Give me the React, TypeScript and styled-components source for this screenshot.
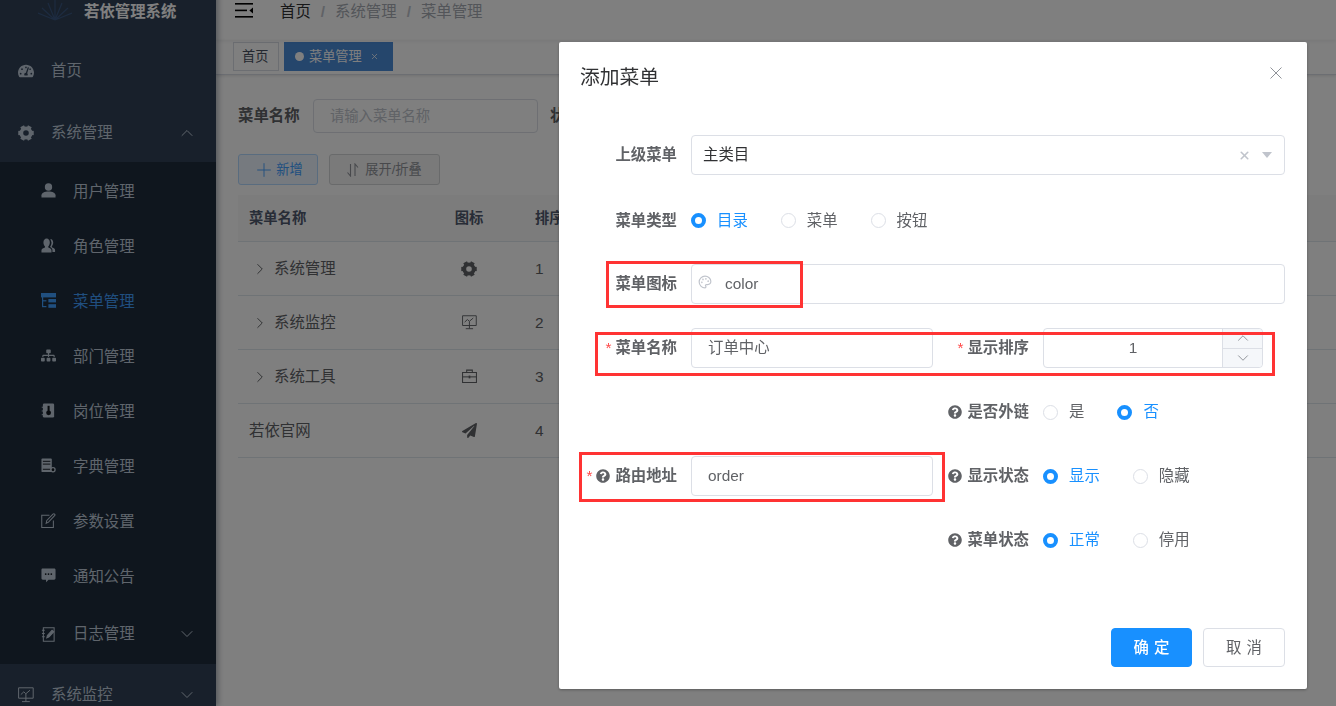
import React, { ReactNode } from "react";
import styled, { createGlobalStyle } from "styled-components";
import { FaPaperPlane, FaQuestionCircle, FaSitemap, FaTachometerAlt } from "react-icons/fa";
import { FiChevronDown, FiChevronRight, FiChevronUp, FiPlus, FiX } from "react-icons/fi";
import { LuPalette } from "react-icons/lu";

const GlobalStyle = createGlobalStyle`
  html, body { margin: 0; padding: 0; height: 100%; overflow: hidden; }
  body {
    font-family: "Liberation Sans", "Noto Sans CJK SC", sans-serif;
    font-size: 15.4px;
    line-height: 20px;
    color: #606266;
    background: #fff;
  }
  * { box-sizing: border-box; }
`;

// ---- drawn icons (ruoyi svg set)
type IconProps = { size?: number };

const GearIcon = ({ size = 16 }: IconProps) => (
  <svg width={size} height={size} viewBox="0 0 24 24" fill="none" stroke="currentColor">
    <circle cx="12" cy="12" r="7" strokeWidth="5.6" />
    {[0, 60, 120, 180, 240, 300].map((a) => (
      <line key={a} x1="12" y1="0.4" x2="12" y2="5" strokeWidth="6.4" transform={`rotate(${a + 30} 12 12)`} />
    ))}
  </svg>
);

const UserIcon = ({ size = 16 }: IconProps) => (
  <svg width={size} height={size} viewBox="0 0 16 16" fill="currentColor">
    <ellipse cx="8" cy="4.2" rx="3.9" ry="4" />
    <path d="M0.5 15.5v-2.4c0-2.6 3.4-4 7.5-4s7.5 1.4 7.5 4v2.4z" />
  </svg>
);

const PeoplesIcon = ({ size = 16 }: IconProps) => (
  <svg width={size} height={size} viewBox="0 0 16 16" fill="currentColor">
    <path d="M6 0.5c2 0 3.4 1.8 3.4 4.2 0 2-0.8 3.3-1.6 4.1v1.4c1.4 0.6 3.4 1.3 3.4 3v2.3H0.5v-2.3c0-1.7 2.2-2.4 3.7-3V8.8C3.400 8 2.600 6.700 2.600 4.700 2.600 2.300 4 0.500 6 0.500z" />
    <path d="M10 1c1.800 0.200 3 1.700 3 3.700 0 1.700-0.600 3-1.400 3.800v1.300c1.400 0.600 3.400 1.300 3.400 3v2.200h-2.800v-2.300c0-1.500-1.200-2.500-2.600-3.200 0.800-1 1.600-2.500 1.600-4.600C10.700 3.500 10.500 2.100 10 1z" />
  </svg>
);

const TreeTableIcon = ({ size = 16 }: IconProps) => (
  <svg width={size} height={size} viewBox="0 0 15 15" fill="currentColor">
    <rect x="0" y="0" width="15" height="4.4" />
    <rect x="1" y="0" width="1.2" height="14" />
    <rect x="1" y="7.2" width="4.4" height="1.2" />
    <rect x="1" y="13" width="4.4" height="1.2" />
    <rect x="7.4" y="6" width="7.600" height="3.400" />
    <rect x="7.4" y="11.200" width="7.600" height="3.600" />
  </svg>
);

const PostIcon = ({ size = 16 }: IconProps) => (
  <svg width={size} height={size} viewBox="0 0 16 16">
    <rect x="2" y="0.500" width="12" height="15" rx="1.400" fill="currentColor" />
    <rect x="0.800" y="4" width="2" height="1" fill="currentColor" />
    <rect x="0.800" y="8" width="2" height="1" fill="currentColor" />
    <rect x="0.800" y="12" width="2" height="1" fill="currentColor" />
    <rect x="7" y="3" width="2.200" height="6" fill="#10171f" />
    <circle cx="8.100" cy="10.500" r="2.600" fill="#10171f" />
  </svg>
);

const DictIcon = ({ size = 16 }: IconProps) => (
  <svg width={size} height={size} viewBox="0 0 16 16">
    <rect x="0.500" y="0.500" width="11" height="14.500" rx="1" fill="currentColor" />
    <rect x="2" y="3" width="8" height="1" fill="#10171f" />
    <rect x="2" y="6" width="8" height="1" fill="#10171f" />
    <rect x="2" y="11.500" width="8" height="1" fill="#10171f" />
    <circle cx="12.800" cy="12.500" r="2.200" fill="#10171f" stroke="currentColor" strokeWidth="1.400" />
  </svg>
);

const EditIcon = ({ size = 16 }: IconProps) => (
  <svg width={size} height={size} viewBox="0 0 16 16" fill="none" stroke="currentColor" strokeWidth="1.100">
    <path d="M9 2.500H0.800v13h12.400V8" />
    <path d="M5.500 11l0.700-3L12.800 1.200c0.500-0.500 1.200-0.500 1.700 0s0.500 1.200 0 1.700L8 9.800z" />
  </svg>
);

const MessageIcon = ({ size = 16 }: IconProps) => (
  <svg width={size} height={size} viewBox="0 0 16 16">
    <path
      d="M2 0.500h12c1 0 1.500 0.600 1.500 1.500v9c0 1-0.600 1.500-1.500 1.500H8L5.400 15.200v-2.700H2c-1 0-1.500-0.600-1.500-1.500V2C0.500 1 1 0.500 2 0.500z"
      fill="currentColor"
    />
    <circle cx="5" cy="6.500" r="0.950" fill="#10171f" />
    <circle cx="8" cy="6.500" r="0.950" fill="#10171f" />
    <circle cx="11" cy="6.500" r="0.950" fill="#10171f" />
  </svg>
);

const LogIcon = ({ size = 16 }: IconProps) => (
  <svg width={size} height={size} viewBox="0 0 16 16" fill="none" stroke="currentColor" strokeWidth="1.100">
    <path d="M2.500 0.800h11.500v14.400H2.500z" />
    <path d="M1 3.500h3M1 7h3M1 10.500h3" />
    <path d="M6.200 11.600l0.600-2.600 5-5.600 1.800 1.600-5 5.600z" fill="currentColor" />
  </svg>
);

const MonitorIcon = ({ size = 16 }: IconProps) => (
  <svg width={size} height={size} viewBox="0 0 16 16" fill="none" stroke="currentColor" strokeWidth="1">
    <path d="M0.600 0.800h14.600v10.400H0.600z" />
    <path d="M2.800 7.600l3-2.800 2 2 4.200-3.600" />
    <path d="M7.900 7v7.400M4 14.600h7.800" />
  </svg>
);

const ToolIcon = ({ size = 16 }: IconProps) => (
  <svg width={size} height={size} viewBox="0 0 16 16" fill="none" stroke="currentColor" strokeWidth="1.100">
    <path d="M0.600 3.800h14.800v10.600H0.600z" />
    <path d="M5 3.800V1.200h6v2.600" />
    <path d="M0.600 8.400h14.800" />
    <path d="M8 7v3" strokeWidth="1.800" />
  </svg>
);

const SortIcon = () => (
  <svg width="12" height="14" viewBox="0 0 12 14" fill="none" stroke="currentColor" strokeWidth="1.100">
    <path d="M3.500 1v12L0.500 9.500" />
    <path d="M8 13V1l3 3.500" />
  </svg>
);

const LogoMark = () => (
  <svg width="34" height="22" viewBox="0 0 34 22" fill="none" stroke="#3a5680" strokeWidth="1.200">
    <path d="M17 20V0M17 20L10 3M17 20L24 3M17 20L4 8M17 20L30 8M17 20L0 13M17 20L34 13" />
  </svg>
);

const HamburgerIcon = () => (
  <svg width="18" height="15" viewBox="0 0 18 15" fill="#000">
    <rect x="0" y="0" width="18" height="1.600" />
    <rect x="0" y="6.600" width="12" height="1.600" />
    <rect x="0" y="13" width="18" height="1.600" />
    <path d="M18 4.400v6l-3.600-3z" />
  </svg>
);

const CloseIcon = () => (
  <svg width="12" height="12" viewBox="0 0 12 12" stroke="currentColor" strokeWidth="1">
    <path d="M0.500 0.500l11 11M11.500 0.500l-11 11" />
  </svg>
);

// ---- page shell, shifted up a little as the page is scrolled
const Shell = styled.div`
  display: flex;
  height: 716px;
  margin-top: -10px;
`;

const Sidebar = styled.aside`
  flex: 0 0 216px;
  background: #304156;
  overflow: hidden;
  position: relative;
  z-index: 2;
  box-shadow: 2px 0 6px rgba(0, 21, 41, 0.35);
`;

const LogoRow = styled.div`
  height: 48px;
  display: flex;
  align-items: flex-start;
  gap: 12px;
  padding: 10px 0 0 38px;
  color: #fff;
  font-weight: 700;
  line-height: 24px;
  white-space: nowrap;
`;

const MenuRow = styled.div<{ $active?: boolean; $sub?: boolean; $tall?: boolean }>`
  display: flex;
  align-items: center;
  height: ${(p) => (p.$sub && !p.$tall ? "55px" : "60px")};
  padding-left: ${(p) => (p.$sub ? "40px" : "18px")};
  padding-right: 19px;
  color: ${(p) => (p.$active ? "#409eff" : "#bfcbd9")};
`;

const TopRow = styled(MenuRow)`
  background: #304156;
  padding-top: 2px;
`;

const HomeRow = styled(TopRow)`
  height: 64px;
`;

const MenuIcon = styled.span<{ $sub?: boolean }>`
  flex: 0 0 16px;
  width: 16px;
  height: 16px;
  display: flex;
  align-items: center;
  justify-content: center;
  margin-right: 17px;
  margin-top: ${(p) => (p.$sub ? "-3px" : "0")};
`;

const MenuText = styled.span`
  flex: 1;
`;

const SubMenu = styled.div`
  background: #1f2d3d;
  padding-top: 2px;
`;

const Main = styled.main`
  flex: 1;
  min-width: 0;
  background: #fff;
`;

const Navbar = styled.header`
  height: 50px;
  display: flex;
  align-items: center;
  padding: 0 0 10px 19px;
  position: relative;
  box-shadow: 0 1px 4px rgba(0, 21, 41, 0.08);
`;

const Crumbs = styled.div`
  display: flex;
  align-items: baseline;
  margin: 4px 0 0 27px;
  gap: 10px;
  color: #a6abb3;
`;

const CrumbHome = styled.span`
  color: #303133;
`;

const CrumbSep = styled.span`
  color: #c0c4cc;
  font-weight: 700;
`;

const TagsBar = styled.div`
  height: 35px;
  display: flex;
  align-items: center;
  gap: 5px;
  padding: 0 0 1px 17px;
  border-bottom: 1px solid #d8dce5;
  box-shadow: 0 1px 3px 0 rgba(0, 0, 0, 0.12);
`;

const Tag = styled.div<{ $active?: boolean }>`
  height: 29px;
  display: flex;
  align-items: center;
  font-size: 13.2px;
  white-space: nowrap;
  padding: ${(p) => (p.$active ? "0 0 0 10px" : "0 8px")};
  width: ${(p) => (p.$active ? "109px" : "46px")};
  border: 1px solid ${(p) => (p.$active ? "#4a8cd8" : "#d8dce5")};
  background: ${(p) => (p.$active ? "#4a8cd8" : "#fff")};
  color: ${(p) => (p.$active ? "#fff" : "#495060")};
`;

const TagDot = styled.i`
  width: 9px;
  height: 9px;
  border-radius: 50%;
  background: #fff;
  margin-right: 5px;
`;

const TagClose = styled.span`
  display: flex;
  margin-left: 8px;
`;

const Content = styled.section`
  padding: 24px 0 0 22px;
`;

const SearchForm = styled.div`
  display: flex;
  align-items: center;
  height: 34px;
`;

const SearchLabel = styled.label`
  font-weight: 700;
  width: 75px;
  flex: none;
  white-space: nowrap;
`;

const SearchInput = styled.div`
  width: 225px;
  height: 34px;
  border: 1px solid #dcdfe6;
  border-radius: 4px;
  font-size: 14.3px;
  line-height: 32px;
  color: #c0c4cc;
  padding-left: 16px;
  margin-right: 12px;
  flex: none;
`;

const ToolBar = styled.div`
  display: flex;
  gap: 11px;
  margin-top: 21px;
`;

const MiniButton = styled.div<{ $primary?: boolean }>`
  height: 31px;
  display: flex;
  align-items: center;
  justify-content: center;
  gap: ${(p) => (p.$primary ? "1px" : "6px")};
  border-radius: 3px;
  font-size: 13.2px;
  border: 1px solid ${(p) => (p.$primary ? "#b3d8ff" : "#d3d4d6")};
  background: ${(p) => (p.$primary ? "#ecf5ff" : "#f4f4f5")};
  color: ${(p) => (p.$primary ? "#409eff" : "#909399")};
  width: ${(p) => (p.$primary ? "80px" : "111px")};
`;

const Table = styled.div`
  margin-top: 10px;
`;

const TableRow = styled.div<{ $head?: boolean }>`
  display: grid;
  grid-template-columns: 197px 68px 1fr;
  align-items: center;
  height: ${(p) => (p.$head ? "47px" : "54px")};
  border-bottom: 1px solid #dfe6ec;
  background: ${(p) => (p.$head ? "#f8f8f9" : "#fff")};
  color: ${(p) => (p.$head ? "#515a6e" : "#606266")};
  font-weight: ${(p) => (p.$head ? 700 : 400)};
  font-size: ${(p) => (p.$head ? "14.3px" : "15.4px")};
`;

const NameCell = styled.div<{ $nested?: boolean }>`
  display: flex;
  align-items: center;
  padding-left: ${(p) => (p.$nested ? "13px" : "11px")};
  gap: 5px;
`;

const IconCell = styled.div`
  display: flex;
  justify-content: center;
  white-space: nowrap;
`;

const SortCell = styled.div`
  padding-left: 32px;
`;

// ---- dialog
const Overlay = styled.div`
  position: fixed;
  inset: 0;
  z-index: 10;
  background: rgba(0, 0, 0, 0.5);
`;

const Dialog = styled.div`
  position: relative;
  width: 748px;
  height: 647px;
  margin: 42px 0 0 559px;
  background: #fff;
  border-radius: 2px;
  box-shadow: 0 1px 3px rgba(0, 0, 0, 0.3);
  display: flex;
  flex-direction: column;
`;

const DialogHead = styled.div`
  height: 93px;
  padding: 22px 25px 0 21px;
  display: flex;
  justify-content: space-between;
  align-items: flex-start;
`;

const DialogTitle = styled.div`
  font-size: 19.8px;
  line-height: 26px;
  color: #303133;
`;

const CloseBox = styled.span`
  color: #909399;
  display: flex;
  margin-top: 3px;
`;

const DialogBody = styled.div`
  flex: 1;
  padding: 0 20px;
  display: flex;
  flex-direction: column;
  gap: 24px;
`;

const FormRow = styled.div<{ $h?: number }>`
  display: grid;
  grid-template-columns: 354px 354px;
  height: ${(p) => p.$h ?? 40}px;
  padding-top: ${(p) => (p.$h ? "2px" : "0")};
`;

const FormItem = styled.div<{ $wide?: boolean; $right?: boolean }>`
  display: flex;
  align-items: center;
  grid-column: ${(p) => (p.$wide ? "1 / span 2" : p.$right ? "2" : "1")};
`;

const Label = styled.label<{ $right?: boolean }>`
  flex: 0 0 ${(p) => (p.$right ? "110px" : "112px")};
  padding-right: 14px;
  display: flex;
  align-items: center;
  justify-content: flex-end;
  font-weight: 700;
  color: #606266;
  white-space: nowrap;
`;

const Star = styled.span`
  color: #ff4949;
  font-weight: 400;
  margin-right: 4px;
`;

const HelpIcon = styled.span`
  display: flex;
  margin-right: 5px;
  color: #606266;
`;

const InputBox = styled.div<{ $w?: number; $pad?: number }>`
  width: ${(p) => (p.$w ? `${p.$w}px` : "594px")};
  height: 40px;
  border: 1px solid #dcdfe6;
  border-radius: 4px;
  display: flex;
  align-items: center;
  padding-left: ${(p) => p.$pad ?? 16}px;
  color: #606266;
  position: relative;
`;

const SelectValue = styled.span`
  flex: 1;
  color: #303133;
`;

const SelectTools = styled.span`
  display: flex;
  align-items: center;
  gap: 11px;
  padding-right: 12px;
  color: #c0c4cc;
`;

const Caret = styled.i`
  width: 0;
  height: 0;
  border-left: 5px solid transparent;
  border-right: 5px solid transparent;
  border-top: 6px solid #c0c4cc;
`;

const PrefixIcon = styled.span`
  display: flex;
  color: #c0c4cc;
  margin-right: 13px;
  margin-top: -4px;
`;

const NumberValue = styled.span`
  flex: 1;
  text-align: center;
`;

const Stepper = styled.div`
  flex: 0 0 40px;
  align-self: stretch;
  display: flex;
  flex-direction: column;
  border-left: 1px solid #dcdfe6;
  background: #f5f7fa;
  border-radius: 0 4px 4px 0;
`;

const StepCell = styled.span<{ $bottom?: boolean }>`
  flex: 1;
  min-height: 0;
  display: flex;
  align-items: center;
  justify-content: center;
  overflow: hidden;
  color: #909399;
  border-top: ${(p) => (p.$bottom ? "1px solid #dcdfe6" : "none")};
`;

const RadioGroup = styled.div`
  display: flex;
  align-items: center;
`;

const Radio = styled.span<{ $on?: boolean }>`
  display: flex;
  align-items: center;
  color: ${(p) => (p.$on ? "#1890ff" : "#606266")};
  font-weight: 400;
  margin-right: 33px;
`;

const RadioDot = styled.i<{ $on?: boolean }>`
  width: 15px;
  height: 15px;
  border-radius: 50%;
  margin-right: 11px;
  border: ${(p) => (p.$on ? "4.5px solid #1890ff" : "1px solid #dcdfe6")};
  background: #fff;
`;

const DialogFoot = styled.div`
  height: 61px;
  padding: 0 22px 22px 0;
  display: flex;
  justify-content: flex-end;
  gap: 11px;
`;

const FootButton = styled.div<{ $primary?: boolean }>`
  width: ${(p) => (p.$primary ? "81px" : "82px")};
  height: 39px;
  border-radius: 4px;
  display: flex;
  align-items: center;
  justify-content: center;
  letter-spacing: 5px;
  padding-left: 5px;
  font-weight: ${(p) => (p.$primary ? 500 : 400)};
  background: ${(p) => (p.$primary ? "#1890ff" : "#fff")};
  color: ${(p) => (p.$primary ? "#fff" : "#606266")};
  border: 1px solid ${(p) => (p.$primary ? "#1890ff" : "#dcdfe6")};
`;

// the red annotation boxes painted over the screenshot
const Mark = styled.div<{ $l: number; $t: number; $w: number; $h: number }>`
  position: absolute;
  left: ${(p) => p.$l}px;
  top: ${(p) => p.$t}px;
  width: ${(p) => p.$w}px;
  height: ${(p) => p.$h}px;
  border: 3px solid #ff3333;
  pointer-events: none;
`;

const subItems: { icon: ReactNode; text: string; active?: boolean }[] = [
  { icon: <UserIcon size={15} />, text: "用户管理" },
  { icon: <PeoplesIcon size={15} />, text: "角色管理" },
  { icon: <TreeTableIcon size={15} />, text: "菜单管理", active: true },
  { icon: <FaSitemap size={15} />, text: "部门管理" },
  { icon: <PostIcon size={15} />, text: "岗位管理" },
  { icon: <DictIcon size={15} />, text: "字典管理" },
  { icon: <EditIcon size={15} />, text: "参数设置" },
  { icon: <MessageIcon size={15} />, text: "通知公告" },
];

const tableRows = [
  { name: "系统管理", icon: <GearIcon size={16} />, sort: 1, nested: true },
  { name: "系统监控", icon: <MonitorIcon size={15} />, sort: 2, nested: true },
  { name: "系统工具", icon: <ToolIcon size={15} />, sort: 3, nested: true },
  { name: "若依官网", icon: <FaPaperPlane size={15} />, sort: 4, nested: false },
];

const Help = () => (
  <HelpIcon>
    <FaQuestionCircle size={14} />
  </HelpIcon>
);

export default function App() {
  return (
    <>
      <GlobalStyle />
      <Shell>
        <Sidebar>
          <LogoRow>
            <LogoMark />
            若依管理系统
          </LogoRow>
          <HomeRow>
            <MenuIcon>
              <FaTachometerAlt size={16} />
            </MenuIcon>
            <MenuText>首页</MenuText>
          </HomeRow>
          <TopRow>
            <MenuIcon>
              <GearIcon size={16} />
            </MenuIcon>
            <MenuText>系统管理</MenuText>
            <FiChevronUp size={20} strokeWidth={1.2} />
          </TopRow>
          <SubMenu>
            {subItems.map((item) => (
              <MenuRow key={item.text} $sub $active={item.active}>
                <MenuIcon $sub>{item.icon}</MenuIcon>
                <MenuText>{item.text}</MenuText>
              </MenuRow>
            ))}
            <MenuRow $sub $tall>
              <MenuIcon>
                <LogIcon size={15} />
              </MenuIcon>
              <MenuText>日志管理</MenuText>
              <FiChevronDown size={20} strokeWidth={1.2} />
            </MenuRow>
          </SubMenu>
          <TopRow>
            <MenuIcon>
              <MonitorIcon size={16} />
            </MenuIcon>
            <MenuText>系统监控</MenuText>
            <FiChevronDown size={20} strokeWidth={1.2} />
          </TopRow>
        </Sidebar>
        <Main>
          <Navbar>
            <HamburgerIcon />
            <Crumbs>
              <CrumbHome>首页</CrumbHome>
              <CrumbSep>/</CrumbSep>
              <span>系统管理</span>
              <CrumbSep>/</CrumbSep>
              <span>菜单管理</span>
            </Crumbs>
          </Navbar>
          <TagsBar>
            <Tag>首页</Tag>
            <Tag $active>
              <TagDot />
              菜单管理
              <TagClose>
                <FiX size={9} />
              </TagClose>
            </Tag>
          </TagsBar>
          <Content>
            <SearchForm>
              <SearchLabel>菜单名称</SearchLabel>
              <SearchInput>请输入菜单名称</SearchInput>
              <SearchLabel>状态</SearchLabel>
            </SearchForm>
            <ToolBar>
              <MiniButton $primary>
                <FiPlus size={22} strokeWidth={1} /> 新增
              </MiniButton>
              <MiniButton>
                <SortIcon /> 展开/折叠
              </MiniButton>
            </ToolBar>
            <Table>
              <TableRow $head>
                <NameCell>菜单名称</NameCell>
                <IconCell>图标</IconCell>
                <SortCell>排序</SortCell>
              </TableRow>
              {tableRows.map((row) => (
                <TableRow key={row.name}>
                  <NameCell $nested={row.nested}>
                    {row.nested && <FiChevronRight size={18} strokeWidth={1.3} />}
                    {row.name}
                  </NameCell>
                  <IconCell>{row.icon}</IconCell>
                  <SortCell>{row.sort}</SortCell>
                </TableRow>
              ))}
            </Table>
          </Content>
        </Main>
      </Shell>
      <Overlay>
        <Dialog>
          <DialogHead>
            <DialogTitle>添加菜单</DialogTitle>
            <CloseBox>
              <CloseIcon />
            </CloseBox>
          </DialogHead>
          <DialogBody>
            <FormRow>
              <FormItem $wide>
                <Label>上级菜单</Label>
                <InputBox $pad={11}>
                  <SelectValue>主类目</SelectValue>
                  <SelectTools>
                    <FiX size={13} strokeWidth={3} />
                    <Caret />
                  </SelectTools>
                </InputBox>
              </FormItem>
            </FormRow>
            <FormRow $h={41}>
              <FormItem $wide>
                <Label>菜单类型</Label>
                <RadioGroup>
                  <Radio $on>
                    <RadioDot $on />
                    目录
                  </Radio>
                  <Radio>
                    <RadioDot />
                    菜单
                  </Radio>
                  <Radio>
                    <RadioDot />
                    按钮
                  </Radio>
                </RadioGroup>
              </FormItem>
            </FormRow>
            <FormRow>
              <FormItem $wide>
                <Label>菜单图标</Label>
                <InputBox $pad={6}>
                  <PrefixIcon>
                    <LuPalette size={14} />
                  </PrefixIcon>
                  color
                </InputBox>
              </FormItem>
            </FormRow>
            <FormRow>
              <FormItem>
                <Label>
                  <Star>*</Star>菜单名称
                </Label>
                <InputBox $w={242}>订单中心</InputBox>
              </FormItem>
              <FormItem $right>
                <Label $right>
                  <Star>*</Star>显示排序
                </Label>
                <InputBox $w={220} $pad={0}>
                  <NumberValue>1</NumberValue>
                  <Stepper>
                    <StepCell>
                      <FiChevronUp size={18} strokeWidth={1.3} />
                    </StepCell>
                    <StepCell $bottom>
                      <FiChevronDown size={18} strokeWidth={1.3} />
                    </StepCell>
                  </Stepper>
                </InputBox>
              </FormItem>
            </FormRow>
            <FormRow>
              <FormItem $right>
                <Label $right>
                  <Help />
                  是否外链
                </Label>
                <RadioGroup>
                  <Radio>
                    <RadioDot />是
                  </Radio>
                  <Radio $on>
                    <RadioDot $on />否
                  </Radio>
                </RadioGroup>
              </FormItem>
            </FormRow>
            <FormRow>
              <FormItem>
                <Label>
                  <Star>*</Star>
                  <Help />
                  路由地址
                </Label>
                <InputBox $w={242}>order</InputBox>
              </FormItem>
              <FormItem $right>
                <Label $right>
                  <Help />
                  显示状态
                </Label>
                <RadioGroup>
                  <Radio $on>
                    <RadioDot $on />
                    显示
                  </Radio>
                  <Radio>
                    <RadioDot />
                    隐藏
                  </Radio>
                </RadioGroup>
              </FormItem>
            </FormRow>
            <FormRow>
              <FormItem $right>
                <Label $right>
                  <Help />
                  菜单状态
                </Label>
                <RadioGroup>
                  <Radio $on>
                    <RadioDot $on />
                    正常
                  </Radio>
                  <Radio>
                    <RadioDot />
                    停用
                  </Radio>
                </RadioGroup>
              </FormItem>
            </FormRow>
          </DialogBody>
          <DialogFoot>
            <FootButton $primary>确定</FootButton>
            <FootButton>取消</FootButton>
          </DialogFoot>
          <Mark $l={47} $t={219} $w={197} $h={47} />
          <Mark $l={36} $t={290} $w={680} $h={44} />
          <Mark $l={20} $t={410} $w={366} $h={50} />
        </Dialog>
      </Overlay>
    </>
  );
}
